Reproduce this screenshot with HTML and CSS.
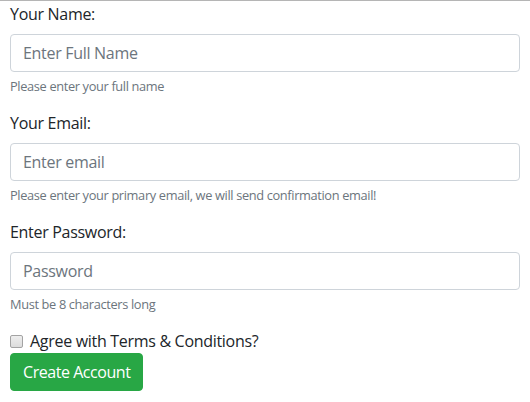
FILE: index.html
```html
<!DOCTYPE html>
<html>
<head>
<meta charset="utf-8">
<link rel="stylesheet" href="styles.css">
</head>
<body>
<form class="form">
  <div class="group">
    <label class="label" for="name">Your Name:</label>
    <input class="input" id="name" type="text" placeholder="Enter Full Name">
    <small class="help">Please enter your full name</small>
  </div>
  <div class="group">
    <label class="label" for="email">Your Email:</label>
    <input class="input" id="email" type="email" placeholder="Enter email">
    <small class="help">Please enter your primary email, we will send confirmation email!</small>
  </div>
  <div class="group">
    <label class="label" for="pw">Enter Password:</label>
    <input class="input" id="pw" type="password" placeholder="Password">
    <small class="help">Must be 8 characters long</small>
  </div>
  <div class="check">
    <input class="checkbox" id="agree" type="checkbox">
    <label class="check-label" for="agree">Agree with Terms &amp; Conditions?</label>
  </div>
  <button class="btn" type="button">Create Account</button>
</form>
</body>
</html>
```
FILE: styles.css
```css
html, body {
  margin: 0;
  padding: 0;
  background: #fff;
}
body {
  border-top: 1px solid #b5b5b5;
  font-family: "Open Sans", "Noto Sans", sans-serif;
  color: #212529;
  font-size: 16px;
  line-height: 1.5;
  letter-spacing: -0.3px;
}
.form {
  padding: 1px 10px 0 10px;
  width: 510px;
}
.group {
  display: flex;
  flex-direction: column;
  margin-bottom: 16px;
}
.label {
  margin-bottom: 8px;
  font-size: 16px;
  line-height: 24px;
}
.input {
  box-sizing: border-box;
  height: 38px;
  width: 100%;
  padding: 6px 12px;
  border: 1px solid #ced4da;
  border-radius: 4px;
  font-family: inherit;
  font-size: 16px;
  letter-spacing: -0.3px;
  color: #495057;
  outline: none;
}
.input::placeholder {
  color: #6c757d;
  opacity: 1;
}
.help {
  margin-top: 4px;
  padding-top: 1px;
  font-size: 12.8px;
  line-height: 18.2px;
  letter-spacing: -0.35px;
  color: #6c757d;
}
.check {
  display: flex;
  align-items: center;
  height: 23px;
  gap: 7px;
}
.checkbox {
  appearance: none;
  -webkit-appearance: none;
  box-sizing: border-box;
  margin: 0;
  width: 13px;
  height: 13px;
  border: 1px solid #a3a3a3;
  border-radius: 2px;
  background: linear-gradient(#eeeeee, #dcdcdc);
}
.check-label {
  font-size: 16px;
}
.btn {
  display: block;
  height: 38px;
  padding: 6px 12px;
  border: 1px solid #28a745;
  border-radius: 4px;
  background: #28a745;
  color: #fff;
  font-family: inherit;
  font-size: 16px;
  letter-spacing: -0.45px;
  line-height: 24px;
}
```
